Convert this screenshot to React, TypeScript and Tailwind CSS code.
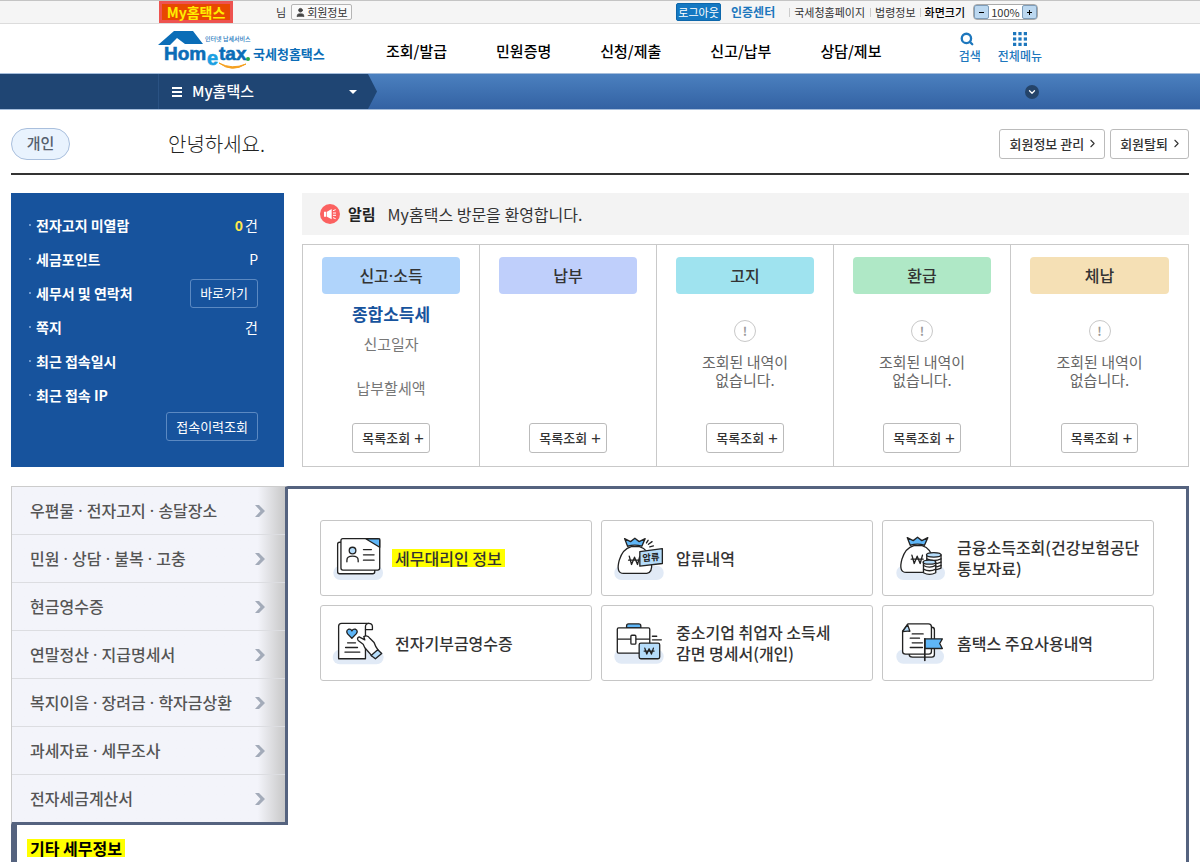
import React from "react";
import { ChevronDown, ChevronRight, Search, User } from "lucide-react";

const MAIN_MENU = ["조회/발급", "민원증명", "신청/제출", "신고/납부", "상담/제보"];

const SIDE_MENU = [
  "우편물 · 전자고지 · 송달장소",
  "민원 · 상담 · 불복 · 고충",
  "현금영수증",
  "연말정산 · 지급명세서",
  "복지이음 · 장려금 · 학자금상환",
  "과세자료 · 세무조사",
  "전자세금계산서",
];

const INK = "#222";

export default function App() {
  return (
    <div className="flex min-h-screen flex-col bg-white font-['Noto_Sans_CJK_KR','Noto_Sans',sans-serif] text-[#333]">
      <TopBar />
      <Header />
      <SubBar />

      <div className="flex flex-1 flex-col px-[11px]">
        {/* Greeting */}
        <div className="flex h-[65px] items-center border-b-2 border-[#333] pt-1">
          <span className="flex h-8 w-[59px] items-center justify-center rounded-full border border-[#a9bfdd] bg-[#e9f3fe] text-[15px] font-medium text-[#55606e]">
            개인
          </span>
          <h1 className="ml-[98px] text-xl font-light text-[#222]">안녕하세요.</h1>
          <div className="ml-auto flex gap-[5px]">
            <MemberButton label="회원정보 관리" />
            <MemberButton label="회원탈퇴" />
          </div>
        </div>

        {/* Summary */}
        <div className="mt-[18px] flex gap-[18px]">
          <AccountPanel />
          <div className="flex min-w-0 flex-1 flex-col">
            <div className="flex h-[42px] items-center bg-[#f3f3f3] pl-[18px]">
              <SpeakerIcon />
              <strong className="ml-2 text-[15px] font-bold text-[#222]">알림</strong>
              <p className="ml-3 text-[16px]">My홈택스 방문을 환영합니다.</p>
            </div>
            <div className="mt-[9px] grid flex-1 grid-cols-5 divide-x divide-[#c9c9c9] border border-[#c9c9c9]">
              <StatusColumn title="신고·소득" color="bg-[#b0d4fb]">
                <p className="mt-2 text-[17px] leading-6 font-bold text-[#17539d]">종합소득세</p>
                <p className="mt-2 text-[15px] leading-5 text-[#777]">신고일자</p>
                <p className="mt-6 text-[15px] leading-5 text-[#777]">납부할세액</p>
              </StatusColumn>
              <StatusColumn title="납부" color="bg-[#bfcffb]" />
              <StatusColumn title="고지" color="bg-[#9fe3ef]">
                <EmptyNotice />
              </StatusColumn>
              <StatusColumn title="환급" color="bg-[#afe8c6]">
                <EmptyNotice />
              </StatusColumn>
              <StatusColumn title="체납" color="bg-[#f5e0b5]">
                <EmptyNotice />
              </StatusColumn>
            </div>
          </div>
        </div>

        {/* Category tabs */}
        <div className="mt-[19px] flex flex-1">
          <SideMenu />
          <main className="flex-1 border-t-[3px] border-r-[3px] border-[#55637f] px-8 pt-[31px]">
            <div className="grid grid-cols-3 gap-[9px]">
              <ServiceCard icon={<IdCardIcon />}>
                <mark className="-ml-[3px] inline-block bg-[#ffff00] px-[3px] leading-[18px] text-[#333]">
                  세무대리인 정보
                </mark>
              </ServiceCard>
              <ServiceCard icon={<SeizureIcon />}>압류내역</ServiceCard>
              <ServiceCard icon={<MoneyBagIcon />}>
                금융소득조회(건강보험공단
                <br />
                통보자료)
              </ServiceCard>
              <ServiceCard icon={<DonationIcon />}>전자기부금영수증</ServiceCard>
              <ServiceCard icon={<BriefcaseIcon />}>
                중소기업 취업자 소득세
                <br />
                감면 명세서(개인)
              </ServiceCard>
              <ServiceCard icon={<FlagDocIcon />}>홈택스 주요사용내역</ServiceCard>
            </div>
          </main>
        </div>
      </div>
    </div>
  );
}

function TopBar() {
  return (
    <div className="h-6 border-t border-b border-t-[#c4c4c4] border-b-[#dcdcdc] bg-[#f5f5f5]">
      <div className="mx-auto flex h-full max-w-[884px] items-center text-[11px] whitespace-nowrap">
        <a
          href="#my"
          className="ml-px flex h-[22px] w-[74px] items-center justify-center border-[3px] border-[#ee5350] bg-[#e84800] text-[14px] font-bold text-[#ffee00]"
        >
          My홈택스
        </a>
        <span className="ml-[43px]">님</span>
        <button className="ml-[5px] flex h-4 items-center rounded-xs border border-[#b5b5b5] bg-[#fafafa] px-[3px]">
          <User className="mr-px h-[11px] w-[11px] fill-[#444] text-[#444]" />
          회원정보
        </button>

        <div className="mr-1 ml-auto flex items-center">
          <button className="flex h-[18px] w-[45px] items-center justify-center rounded-xs border border-[#0d67ab] bg-[#1478c2] text-white">
            로그아웃
          </button>
          <a href="#cert" className="ml-[10px] text-[12px] font-bold text-[#1d77bd]">
            인증센터
          </a>
          <div className="ml-[14px] flex items-center text-[#333]">
            <a href="#nts" className="border-l border-[#ccc] pl-1 leading-[9px]">국세청홈페이지</a>
            <a href="#law" className="ml-[5px] border-l border-[#ccc] pl-1 leading-[9px]">법령정보</a>
            <span className="ml-1 border-l border-[#ccc] pl-1 leading-[9px] font-medium text-black">화면크기</span>
          </div>
          <div className="ml-2 flex h-4 w-[65px] items-center justify-between rounded-sm border border-[#aaa] bg-white">
            <button aria-label="축소" className="flex h-[14px] w-[15px] items-center justify-center rounded-xs border border-[#7f9db9] bg-[#bcd8f0]">
              <span className="h-px w-[5px] bg-black" />
            </button>
            <span className="text-[11px]">100%</span>
            <button aria-label="확대" className="flex h-[14px] w-[15px] items-center justify-center rounded-xs border border-[#7f9db9] bg-[#bcd8f0]">
              <svg viewBox="0 0 5 5" className="h-[5px] w-[5px]">
                <path d="M0 2h5v1H0zM2 0h1v5H2z" />
              </svg>
            </button>
          </div>
        </div>
      </div>
    </div>
  );
}

function Header() {
  return (
    <header className="mx-auto flex h-[49px] w-full max-w-[884px] items-center whitespace-nowrap">
      <a href="#home" aria-label="홈택스">
        <Logo />
      </a>
      <nav className="ml-[60px] flex gap-[49px] pt-[6px] text-[15px] font-medium text-black">
        {MAIN_MENU.map((item) => (
          <a key={item} href="#menu">
            {item}
          </a>
        ))}
      </nav>
      <div className="ml-auto flex gap-[17px] pb-[2px] text-[12px] leading-4 font-medium text-[#1d77bd]">
        <button className="flex flex-col items-center gap-[2px]">
          <Search className="mr-[6px] h-[14px] w-[14px]" strokeWidth={4} />
          검색
        </button>
        <button className="flex flex-col items-center gap-[2px]">
          <svg viewBox="0 0 13 13" className="h-[14px] w-[14px] fill-[#1d77bd]">
            {[0, 5, 10].map((y) =>
              [0, 5, 10].map((x) => <rect key={`${x}-${y}`} x={x} y={y} width="3" height="3" />)
            )}
          </svg>
          전체메뉴
        </button>
      </div>
    </header>
  );
}

function SubBar() {
  return (
    <div className="flex h-[37px] border-t border-b border-[#a5bddb] bg-linear-to-b from-[#4b80bf] to-[#3362a3]">
      <div className="flex-1 bg-[#1f4573]" />
      <div className="flex w-full max-w-[884px] items-center">
        <button className="flex h-full w-[210px] items-center border-l border-[#2a5283] bg-[#1f4573] pl-[13px] text-white">
          <svg viewBox="0 0 10 10" className="h-[10px] w-[10px] fill-white">
            <path d="M0 0h10v2H0zM0 4h10v2H0zM0 8h10v2H0z" />
          </svg>
          <span className="ml-[10px] text-[15px] font-medium">My홈택스</span>
          <svg viewBox="0 0 8 4" className="mr-[11px] ml-auto h-1 w-2 fill-white">
            <path d="M0 0h8L4 4z" />
          </svg>
        </button>
        <svg viewBox="0 0 9 36" preserveAspectRatio="none" className="h-full w-[9px] fill-[#1f4573]">
          <path d="M0 0L9 18L0 36z" />
        </svg>
        <button
          aria-label="펼치기"
          className="mr-[3px] ml-auto flex h-[14px] w-[14px] items-center justify-center rounded-full bg-[#254469] text-white"
        >
          <ChevronDown className="h-[10px] w-[10px]" strokeWidth={3} />
        </button>
      </div>
      <div className="flex-1" />
    </div>
  );
}

function MemberButton({ label }: { label: string }) {
  return (
    <button className="flex h-[30px] items-center rounded-[3px] border border-[#bbb] pr-[5px] pl-[9px] text-[13px] font-medium text-[#333]">
      {label}
      <ChevronRight className="ml-[2px] h-[13px] w-[13px]" strokeWidth={2} />
    </button>
  );
}

function AccountPanel() {
  return (
    <section className="w-[273px] shrink-0 bg-[#17539d] pt-[15px] pr-[26px] pb-[26px] pl-[18px] text-white">
      <ul className="text-[14px] [&>li]:flex [&>li]:h-[34px] [&>li]:items-center">
        <AccountRow label="전자고지 미열람">
          <b className="mr-[2px] text-[#ffe94d]">0</b>건
        </AccountRow>
        <AccountRow label="세금포인트">P</AccountRow>
        <AccountRow label="세무서 및 연락처">
          <PanelButton label="바로가기" />
        </AccountRow>
        <AccountRow label="쪽지">건</AccountRow>
        <AccountRow label="최근 접속일시" />
        <AccountRow label="최근 접속 IP" />
      </ul>
      <div className="flex justify-end">
        <PanelButton label="접속이력조회" />
      </div>
    </section>
  );
}

function AccountRow({ label, children }: { label: string; children?: React.ReactNode }) {
  return (
    <li>
      <span className="mr-[5px] h-[2px] w-[2px] bg-[#6f9bd0]" />
      <span className="font-bold">{label}</span>
      <span className="ml-auto flex items-center">{children}</span>
    </li>
  );
}

function PanelButton({ label }: { label: string }) {
  return (
    <button className="h-[29px] rounded-[3px] border border-[#5b89c2] px-[9px] text-[13px]">
      {label}
    </button>
  );
}

function StatusColumn({
  title,
  color,
  children,
}: {
  title: string;
  color: string;
  children?: React.ReactNode;
}) {
  return (
    <div className="flex flex-col items-center px-[19px] pt-3 pb-[13px] text-center">
      <h2
        className={`flex h-[37px] w-full items-center justify-center rounded-[4px] font-['Noto_Sans','Noto_Sans_CJK_KR',sans-serif] text-[16px] leading-6 font-medium text-[#333] ${color}`}
      >
        {title}
      </h2>
      {children}
      <button className="mt-auto flex h-[30px] items-center gap-1 rounded-[3px] border border-[#bbb] pr-[5px] pl-[9px] text-[13px] font-medium text-[#333]">
        목록조회 <span className="text-[17px] leading-4 font-normal">+</span>
      </button>
    </div>
  );
}

function EmptyNotice() {
  return (
    <>
      <span className="mt-[26px] flex h-[22px] w-[22px] items-center justify-center rounded-full border border-[#c8c8c8] text-[12px] font-bold text-[#999]">
        !
      </span>
      <p className="mt-[11px] text-[15px] leading-[18px] text-[#666]">
        조회된 내역이
        <br />
        없습니다.
      </p>
    </>
  );
}

function SideMenu() {
  return (
    <nav className="flex w-[277px] shrink-0 flex-col text-[16px] font-medium">
      <ul className="divide-y divide-[#dcdde1] border-t border-r-[3px] border-b-[3px] border-l border-t-[#ccc] border-r-[#55637f] border-b-[#55637f] border-l-[#ccc] bg-linear-to-l from-[#c8c8c8] via-[#f3f4fa] via-10% to-[#f3f4fa]">
        {SIDE_MENU.map((item) => (
          <li key={item}>
            <a
              href="#tab"
              className="flex h-[47px] items-center pr-5 pl-[18px] font-['Noto_Sans','Noto_Sans_CJK_KR',sans-serif] leading-6 text-[#555]"
            >
              {item}
              <svg viewBox="0 0 10 12" className="ml-auto h-3 w-[10px] fill-[#a3abb9]">
                <path d="M0 0H4L10 6L4 12H0L5.5 6z" />
              </svg>
            </a>
          </li>
        ))}
      </ul>
      <a href="#etc" className="block flex-1 border-l-[6px] border-[#55637f] pt-[11px] pl-[10px] leading-6 font-bold text-black">
        <mark className="inline-block bg-[#ffff00] px-[3px] leading-[18px]">기타 세무정보</mark>
      </a>
    </nav>
  );
}

function ServiceCard({ icon, children }: { icon: React.ReactNode; children: React.ReactNode }) {
  return (
    <a
      href="#service"
      className="flex h-[76px] items-center gap-[10px] rounded-[3px] border border-[#c6c6c6] pl-[11px] text-[16px] leading-[21px] font-medium whitespace-nowrap text-[#333]"
    >
      {icon}
      <span>{children}</span>
    </a>
  );
}

function Logo() {
  return (
    <svg viewBox="0 0 168 42" className="h-[42px] w-[168px]">
      <path d="M0 17L16 3H35L45 16H27L19 10L12 17z" fill="#0b6db7" />
      <text x="47" y="13" fontSize="6" fontWeight="500" fill="#1d77bd">인터넷 납세서비스</text>
      <g fontFamily="Liberation Sans, sans-serif" fontWeight="700" fontSize="19" fill="#0b6db7" stroke="#0b6db7" strokeWidth="0.6">
        <text x="6" y="32">Hom</text>
        <text x="61" y="32">tax</text>
      </g>
      <text x="49" y="37" fontFamily="Liberation Sans, sans-serif" fontWeight="700" fontSize="20" fill="#1ba0e2" stroke="#1ba0e2" strokeWidth="0.6">
        e
      </text>
      <circle cx="90" cy="31" r="2" fill="#27a74a" />
      <path d="M61 35Q74 45 88 36Q74 42 61 35z" fill="#f5a01f" stroke="#f5a01f" />
      <text x="95" y="31" fontSize="13" fontWeight="700" fill="#0b6db7">국세청홈택스</text>
    </svg>
  );
}

function SpeakerIcon() {
  return (
    <svg viewBox="0 0 60 60" className="h-5 w-5">
      <circle cx="30" cy="30" r="30" fill="#fb6160" />
      <path d="M12 23h7v15h-7zM21 23L35 15V46L21 38z" fill="#fff" />
      <path d="M39 20l8-3M39 27h9M39 34h9M39 41l8 3" stroke="#fff" strokeWidth="3" />
    </svg>
  );
}

function IconFrame({ viewBox, children }: { viewBox: string; children: React.ReactNode }) {
  return (
    <svg
      viewBox={viewBox}
      className="h-[47px] w-[53px] shrink-0"
      fill="#fff"
      stroke={INK}
      strokeWidth="4"
      strokeLinecap="round"
      strokeLinejoin="round"
    >
      {children}
    </svg>
  );
}

function IdCardIcon() {
  return (
    <IconFrame viewBox="65 75 160 140">
      <rect x="69" y="167" width="150" height="43" rx="21" fill="#e1eaf6" stroke="none" />
      <rect x="82" y="96" width="112" height="95" rx="6" />
      <rect x="92" y="85" width="117" height="95" rx="6" />
      <path d="M168 86H209V111z" fill="#5fb6f7" />
      <circle cx="127" cy="121" r="10" fill="#b5dcfa" />
      <path d="M110 155V150Q110 138 127 138Q144 138 144 150V155" fill="none" />
      <path d="M160 118H184M160 134H192M160 150H192" />
    </IconFrame>
  );
}

function DonationIcon() {
  return (
    <IconFrame viewBox="65 329 160 140">
      <rect x="67" y="418" width="154" height="44" rx="22" fill="#e1eaf6" stroke="none" />
      <path d="M85 445V347Q85 338 94 338H176Q187 338 187 348V357H166V445z" />
      <path d="M166 357V348Q166 339 176 338" fill="none" />
      <path d="M125 383L112 370Q106 360 115 356Q122 354 125 361Q129 354 136 356Q145 361 138 370z" fill="#5fb6f7" />
      <path d="M112 397H136M106 411H142M104 425H149" />
      <path d="M187 438L172 421Q162 412 159 401L144 390Q139 382 147 379L164 388L161 378Q172 372 180 384L192 396Q195 407 206 421z" />
      <path d="M183 435L203 418L215 429L196 445z" fill="#b5dcfa" />
    </IconFrame>
  );
}

function Bag() {
  return (
    <>
      <path d="M108 109Q82 116 72 150Q61 190 85 190H155Q173 187 169 157Q160 116 133 109z" />
      <path d="M97 108L88 85L106 94L119 84L132 94L150 85L140 108Q119 101 97 108z" fill="#5fb6f7" />
      <path d="M102 138L109 163L118 141L127 163L134 138M100 150H136" fill="none" />
    </>
  );
}

function SeizureIcon() {
  return (
    <IconFrame viewBox="53 75 160 140">
      <rect x="57" y="167" width="149" height="43" rx="21" fill="#e1eaf6" stroke="none" />
      <Bag />
      <path d="M154 98L159 90M160 102L171 94M164 110L175 107" />
      <path d="M134 124L202 115V160L134 168z" fill="#b5dcfa" />
      <text
        x="142"
        y="152"
        fontSize="28"
        fontWeight="700"
        fill={INK}
        stroke="none"
        transform="rotate(-5 168 142)"
      >
        압류
      </text>
    </IconFrame>
  );
}

function MoneyBagIcon() {
  return (
    <IconFrame viewBox="54 75 160 140">
      <rect x="61" y="167" width="147" height="43" rx="21" fill="#e1eaf6" stroke="none" />
      <g transform="translate(6 -3)">
        <Bag />
      </g>
      <path d="M153 134V174Q175 184 196 174V134z" />
      <path d="M153 146Q175 156 196 146M153 156Q175 166 196 156M153 166Q175 176 196 166" fill="none" />
      <ellipse cx="174" cy="134" rx="22" ry="7" fill="#b5dcfa" />
      <path d="M143 156V188Q161 198 180 188V156z" />
      <path d="M143 166Q161 176 180 166M143 177Q161 187 180 177" fill="none" />
      <ellipse cx="161" cy="156" rx="19" ry="6" fill="#b5dcfa" />
    </IconFrame>
  );
}

function BriefcaseIcon() {
  return (
    <IconFrame viewBox="53 329 160 140">
      <rect x="57" y="417" width="149" height="43" rx="21" fill="#e1eaf6" stroke="none" />
      <path d="M94 352V346Q94 340 100 340H131Q137 340 137 346V352z" fill="#5fb6f7" />
      <rect x="66" y="352" width="98" height="76" rx="4" />
      <path d="M67 386H163M172 377H185M172 388H199" />
      <rect x="107" y="374" width="15" height="27" rx="3" />
      <rect x="132" y="398" width="62" height="47" rx="5" fill="#b5dcfa" />
      <path d="M149 413L155 431L162 415L169 431L175 413M147 422H177" fill="none" />
    </IconFrame>
  );
}

function FlagDocIcon() {
  return (
    <IconFrame viewBox="54 329 160 140">
      <rect x="61" y="417" width="144" height="43" rx="21" fill="#e1eaf6" stroke="none" />
      <path d="M100 350H168Q176 350 176 358V432Q176 440 168 440H110Q100 440 100 432z" />
      <path d="M80 362L96 340H158Q167 340 167 349V423Q167 431 159 431H89Q80 431 80 423z" />
      <path d="M80 363L95 342L102 362Q92 361 80 363z" fill="#b5dcfa" />
      <path d="M109 370H142M103 383H131M109 397H140M103 411H140" />
      <path d="M147 385H200L192 399L200 414H147z" fill="#5fb6f7" />
      <path d="M147 385V450" strokeWidth="5" />
    </IconFrame>
  );
}
